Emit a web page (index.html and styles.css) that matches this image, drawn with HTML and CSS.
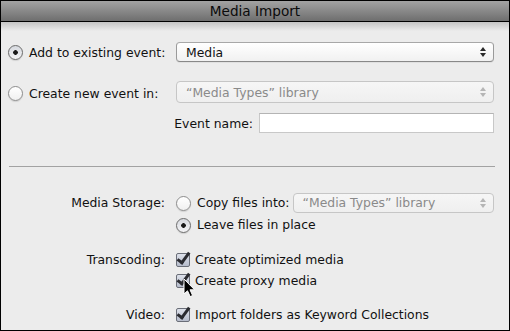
FILE: index.html
```html
<!DOCTYPE html>
<html>
<head>
    <link rel="stylesheet" href="styles.css">
</head>
<body>
    <div class="window">
        <div class="titlebar">Media Import</div>
        <div class="content">
            <div class="form-grid top">
                <label class="opt"><span class="radio on"></span>Add to existing event:</label>
                <div class="popup"><span class="value">Media</span>
                    <svg class="arrows" width="6" height="10" viewBox="0 0 6 10"><path d="M0 4 L3 0 L6 4 Z M0 6 L3 10 L6 6 Z" fill="#2a2a2a"/></svg>
                </div>

                <label class="opt row2"><span class="radio"></span>Create new event in:</label>
                <div class="popup disabled row2"><span class="value">“Media Types” library</span>
                    <svg class="arrows" width="6" height="10" viewBox="0 0 6 10"><path d="M0 4 L3 0 L6 4 Z M0 6 L3 10 L6 6 Z" fill="#2a2a2a"/></svg>
                </div>

                <div class="cell-empty row3"></div>
                <div class="event-name row3">
                    <span class="label">Event name:</span>
                    <input class="field" type="text">
                </div>
            </div>

            <div class="separator"></div>

            <div class="form-grid bottom">
                <span class="label right">Media Storage:</span>
                <div class="copy-row">
                    <label class="opt"><span class="radio"></span>Copy files into:</label>
                    <div class="popup disabled small"><span class="value">“Media Types” library</span>
                        <svg class="arrows" width="6" height="10" viewBox="0 0 6 10"><path d="M0 4 L3 0 L6 4 Z M0 6 L3 10 L6 6 Z" fill="#2a2a2a"/></svg>
                    </div>
                </div>

                <div class="cell-empty"></div>
                <label class="opt"><span class="radio on"></span>Leave files in place</label>

                <span class="label right">Transcoding:</span>
                <label class="opt"><span class="check on"></span>Create optimized media</label>

                <div class="cell-empty"></div>
                <label class="opt"><span class="check on"></span>Create proxy media
                    <svg class="cursor" width="13" height="20" viewBox="0 0 13 20">
                        <path d="M1 1 L1 16 L4.5 12.8 L7.2 18.6 L9.6 17.5 L7 11.8 L11.6 11.8 Z" fill="#000" stroke="#fff" stroke-width="1"/>
                    </svg>
                </label>

                <span class="label right">Video:</span>
                <label class="opt"><span class="check on"></span>Import folders as Keyword Collections</label>

                <div class="cell-empty"></div>
                <div class="opt"><span class="check"></span></div>
            </div>
        </div>
    </div>
</body>
</html>
```

FILE: styles.css
```css
html, body {
    margin: 0;
    padding: 0;
    overflow: hidden;
    background: #ececec;
}

.window {
    width: 510px;
    height: 331px;
    box-sizing: border-box;
    border: 1px solid #000;
    border-top: none;
    background: #ececec;
    font-family: 'DejaVu Sans', sans-serif;
    font-size: 12.4px;
    color: #111;
    overflow: hidden;
    position: relative;
}

.titlebar {
    height: 20px;
    border-top: 1px solid #000;
    border-bottom: 1px solid #000;
    margin: 0 -1px;
    background: linear-gradient(#a3a3a3, #6e6e6e);
    text-align: center;
    font-size: 13.6px;
    line-height: 21px;
    color: #0a0a0a;
}

.content {
    padding: 0 14px 0 7px;
    background: linear-gradient(#c4c4c4, #ececec 9px);
}

.form-grid {
    display: grid;
    grid-template-columns: 157px 318px;
    column-gap: 11px;
    align-items: center;
}

.form-grid.top {
    padding-top: 20px;
    grid-template-rows: 20px 41px 30px;
}

.form-grid.top .row2,
.form-grid.top .row3 {
    align-self: end;
    height: 20px;
}

.opt {
    display: flex;
    align-items: center;
    gap: 6px;
    white-space: nowrap;
    position: relative;
}

.label {
    white-space: nowrap;
}

.label.right {
    text-align: right;
}

.radio {
    width: 13px;
    height: 13px;
    border-radius: 50%;
    border: 1px solid #8d8d8d;
    background: linear-gradient(#ffffff, #f0f0f0);
    box-shadow: 0 1px 1px rgba(0, 0, 0, 0.12);
    flex: none;
}

.radio.on {
    background: radial-gradient(circle, #1a1a1a 0, #1a1a1a 2px, transparent 2.6px),
                linear-gradient(#d6d9df, #f4f4f6);
    border-color: #6c6c6c;
}

.check {
    width: 12px;
    height: 12px;
    border: 1px solid #7b7b7b;
    border-radius: 2px;
    background: linear-gradient(#f4f4f6, #e2e4e8);
    flex: none;
    position: relative;
    margin-right: -1px;
}

.check.on {
    background: linear-gradient(#dde1ea, #b6bccb);
    border-color: #6a6e78;
}

.check.on::after {
    content: "";
    position: absolute;
    left: 3px;
    top: -4px;
    width: 4px;
    height: 11px;
    border-right: 3px solid #2a2b30;
    border-bottom: 3px solid #2a2b30;
    transform: rotate(36deg);
}

.popup {
    height: 18px;
    border: 1px solid #9a9a9a;
    border-top-color: #a8a8a8;
    border-bottom-color: #888;
    border-radius: 4px;
    background: linear-gradient(#ffffff, #f1f1f1);
    display: flex;
    align-items: center;
    justify-content: space-between;
    padding: 0 7px 0 9px;
    box-shadow: 0 1px 0 rgba(0, 0, 0, 0.05);
    white-space: nowrap;
}

.popup .arrows {
    flex: none;
}

.popup.disabled {
    border-color: #c6c6c6;
    background: linear-gradient(#f6f6f6, #efefef);
    box-shadow: none;
}

.popup.disabled .value {
    color: #8a8a8a;
}

.popup.disabled .arrows {
    opacity: 0.3;
}

.event-name {
    display: flex;
    align-items: center;
    justify-content: flex-end;
    gap: 6px;
}

.field {
    flex: none;
    width: 233px;
    height: 18px;
    box-sizing: content-box;
    padding: 0;
    border: 1px solid #c8c8c8;
    border-top-color: #b4b4b4;
    background: #fff;
    outline: none;
}

.separator {
    height: 1px;
    background: #a2a2a2;
    margin: 33px 0 0 1px;
    width: 486px;
}

.form-grid.bottom {
    padding-top: 26px;
    grid-template-rows: 20px 22px 35px 21px 34px 22px;
}

.form-grid.bottom > * {
    align-self: end;
    line-height: 20px;
    height: 20px;
}

.copy-row {
    display: flex;
    align-items: center;
    gap: 3px;
}

.popup.small {
    flex: 1;
    line-height: 18px;
}

.cursor {
    position: absolute;
    left: 7px;
    top: 7px;
}
```
